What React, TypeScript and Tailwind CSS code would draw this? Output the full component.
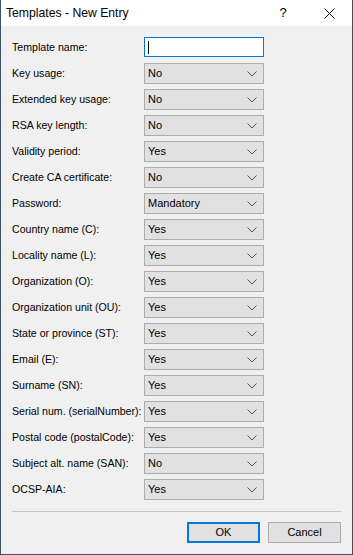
const rows: { label: string; value: string }[] = [
  { label: 'Key usage:', value: 'No' },
  { label: 'Extended key usage:', value: 'No' },
  { label: 'RSA key length:', value: 'No' },
  { label: 'Validity period:', value: 'Yes' },
  { label: 'Create CA certificate:', value: 'No' },
  { label: 'Password:', value: 'Mandatory' },
  { label: 'Country name (C):', value: 'Yes' },
  { label: 'Locality name (L):', value: 'Yes' },
  { label: 'Organization (O):', value: 'Yes' },
  { label: 'Organization unit (OU):', value: 'Yes' },
  { label: 'State or province (ST):', value: 'Yes' },
  { label: 'Email (E):', value: 'Yes' },
  { label: 'Surname (SN):', value: 'Yes' },
  { label: 'Serial num. (serialNumber):', value: 'Yes' },
  { label: 'Postal code (postalCode):', value: 'Yes' },
  { label: 'Subject alt. name (SAN):', value: 'No' },
  { label: 'OCSP-AIA:', value: 'Yes' },
];

function Chevron() {
  return (
    <svg width="10" height="6" viewBox="0 0 10 6" className="shrink-0">
      <path d="M0.5 0.5 L5 5 L9.5 0.5" fill="none" stroke="#555" strokeWidth="1" />
    </svg>
  );
}

function ComboBox({ value }: { value: string }) {
  return (
    <div className="w-[120px] h-[21px] bg-[#e1e1e1] border border-[#adadad] flex items-center justify-between pl-[3px] pr-[6px] text-black text-[11px]">
      <span>{value}</span>
      <Chevron />
    </div>
  );
}

export default function App() {
  return (
    <div
      className="w-[353px] h-[555px] flex flex-col bg-[#f0f0f0] border border-[#3f5165] border-t-0 text-[10.6px] text-black"
      style={{ fontFamily: '"Liberation Sans", Arial, sans-serif' }}
    >
      <div className="h-[26px] bg-white flex items-center shrink-0">
        <span className="pl-[5px] text-[12.2px] flex-1">Templates - New Entry</span>
        <span className="text-[13px] w-[46px] text-center">?</span>
        <div className="w-[46px] flex justify-center">
          <svg width="11" height="11" viewBox="0 0 11 11">
            <path d="M0.5 0.5 L10.5 10.5 M10.5 0.5 L0.5 10.5" stroke="#111" strokeWidth="1" />
          </svg>
        </div>
      </div>

      <div className="flex flex-col gap-[5px] pt-[11px] pl-[11px]">
        <div className="h-[21px] flex items-center">
          <span className="w-[132px] whitespace-nowrap">Template name:</span>
          <div className="w-[120px] h-[20px] bg-white border border-[#0078d7] flex items-center pl-[3px] self-start">
            <div className="w-px h-[13px] bg-black" />
          </div>
        </div>
        {rows.map((r) => (
          <div key={r.label} className="h-[21px] flex items-center">
            <span className="w-[132px] whitespace-nowrap">{r.label}</span>
            <ComboBox value={r.value} />
          </div>
        ))}
      </div>

      <div className="mt-[11px] mx-[11px] h-px bg-[#c8c8c8]" />

      <div className="flex justify-end gap-[8px] pt-[10px] pr-[11px] text-[11px]">
        <button className="w-[73px] h-[21px] bg-[#e1e1e1] border-2 border-[#0078d7] flex items-center justify-center">
          OK
        </button>
        <button className="w-[73px] h-[21px] bg-[#e1e1e1] border border-[#adadad] flex items-center justify-center">
          Cancel
        </button>
      </div>
    </div>
  );
}
